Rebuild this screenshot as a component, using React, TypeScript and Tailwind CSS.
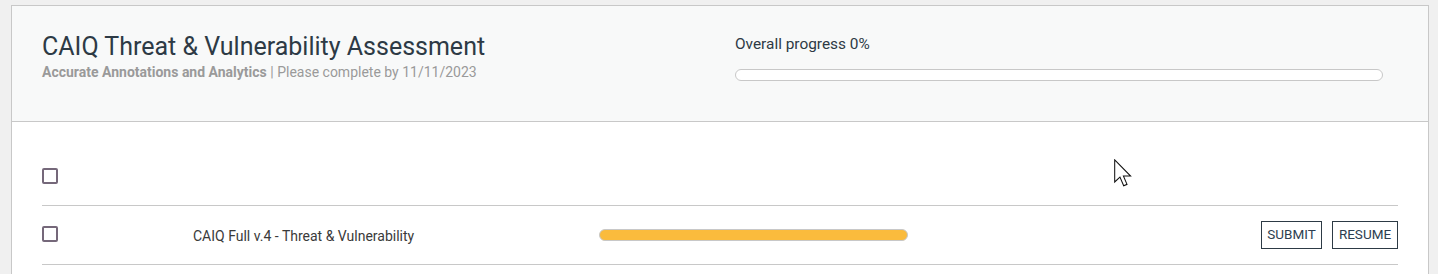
function Checkbox({ className = '' }: { className?: string }) {
  return <div className={`w-[16px] h-[16px] border-2 border-[#75687a] rounded-[2px] bg-white ${className}`} />;
}

function Cursor() {
  return (
    <svg
      className="absolute left-[1114px] top-[159px]"
      width="18"
      height="28"
      viewBox="0 0 13 20"
      fill="none"
    >
      <path
        d="M0.5 0.5 L0.5 16.5 L4.3 12.9 L7 19.2 L9.4 18.2 L6.8 12.2 L12 12.2 Z"
        fill="#ffffff"
        stroke="#111111"
        strokeWidth="0.75"
        strokeLinejoin="miter"
      />
    </svg>
  );
}

export default function App() {
  return (
    <div
      className="relative min-h-[274px] bg-[#f0f0f0] pt-[5px] pl-[11px] pr-[9px] overflow-hidden"
      style={{ fontFamily: 'Roboto, "Open Sans", sans-serif' }}
    >
      <div className="border border-[#c8c8c8] bg-white">
        {/* Header */}
        <div className="h-[116px] bg-[#f8f9f9] border-b border-[#c8c8c8] flex items-start pl-[30px]">
          <div className="w-[693px] pt-[26px]">
            <h1 className="text-[25px] leading-[30px] text-[#2d3a45] font-normal">
              CAIQ Threat &amp; Vulnerability Assessment
            </h1>
            <p className="mt-[2px] text-[14px] leading-[16px] text-[#9a9a9a] whitespace-nowrap">
              <span className="font-bold">Accurate Annotations and Analytics</span> | Please complete by 11/11/2023
            </p>
          </div>
          <div className="w-[648px] pt-[28px]">
            <div className="text-[15.4px] leading-[20px] text-[#2d3a45]">Overall progress 0%</div>
            <div className="mt-[15px] h-[12px] w-[648px] rounded-full border border-[#c8c8c8] bg-white" />
          </div>
        </div>

        {/* Body */}
        <div className="px-[30px] pt-[25px] pb-[20px]">
          <div className="h-[59px] border-b border-[#c8c8c8] flex items-center">
            <Checkbox />
          </div>
          <div className="h-[59px] border-b border-[#c8c8c8] flex items-center">
            <div className="w-[151px] flex">
              <Checkbox className="-mt-[3px]" />
            </div>
            <div className="w-[406px] text-[14px] leading-[18px] pt-[1px] text-[#3a3a3a] whitespace-nowrap">
              CAIQ Full v.4 - Threat &amp; Vulnerability
            </div>
            <div className="w-[309px] h-[12px] rounded-full border border-[#c8c8c8] bg-[#fabb3d]" />
            <div className="flex-1 flex justify-end gap-[10px]">
              <button className="h-[28px] w-[61px] border border-[#2d3a45] bg-white text-[13.5px] text-[#2d3e50] uppercase leading-none">
                Submit
              </button>
              <button className="h-[28px] w-[66px] border border-[#2d3a45] bg-white text-[13.5px] text-[#2d3e50] uppercase leading-none">
                Resume
              </button>
            </div>
          </div>
        </div>
      </div>
      <Cursor />
    </div>
  );
}
